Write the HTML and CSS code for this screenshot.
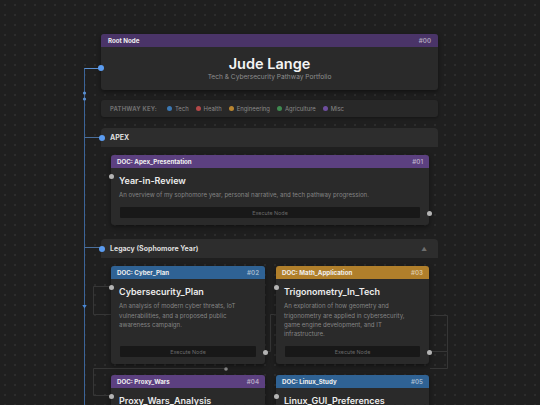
FILE: index.html
```html
<!DOCTYPE html>
<html lang="en">
<head>
<meta charset="utf-8">
<title>Jude Lange — Pathway Portfolio</title>
<link rel="stylesheet" href="styles.css">
</head>
<body>
<div class="canvas">
  <svg class="wires" width="540" height="405" viewBox="0 0 540 405" aria-hidden="true">
    <!-- main trunk and branch edges -->
    <path class="trunk" d="M84.5 68 V405"/>
    <path class="edge-hot" d="M84.5 68.5 H101"/>
    <path class="edge-blue" d="M84.5 137.5 H102"/>
    <path class="edge-blue" d="M84.5 247.5 H102"/>
    <circle class="knot" cx="84.5" cy="93" r="1.6"/>
    <circle class="knot" cx="84.5" cy="99" r="1.6"/>
    <path class="arrow" d="M82.3 305 L86.7 305 L84.5 308.5 Z"/>
    <!-- faint document edges -->
    <path class="edge" d="M111 286.5 H93.5 V314.5 H112"/>
    <path class="edge" d="M265 351.5 H270.5 V314.5 H277"/>
    <path class="edge" d="M429 351.5 H447.5 V315.5 H430"/>
    <path class="edge" d="M447.5 351.5 V368.5 H430"/>
    <path class="edge" d="M226 368.5 H93.5 V395.5 H111"/>
    <circle class="handle" cx="226" cy="369" r="1.8"/>
  </svg>

  <main class="column">
    <article class="node root">
      <header class="node-head head-root"><span>Root Node</span><span class="node-id">#00</span></header>
      <div class="root-body">
        <h1>Jude Lange</h1>
        <p>Tech &amp; Cybersecurity Pathway Portfolio</p>
      </div>
      <span class="port port-blue port-root"></span>
    </article>

    <div class="key">
      <span class="key-label">PATHWAY KEY:</span>
      <span class="key-item"><i class="swatch tech"></i>Tech</span>
      <span class="key-item"><i class="swatch health"></i>Health</span>
      <span class="key-item"><i class="swatch eng"></i>Engineering</span>
      <span class="key-item"><i class="swatch agri"></i>Agriculture</span>
      <span class="key-item"><i class="swatch misc"></i>Misc</span>
    </div>

    <section class="group">
      <div class="group-head"><span class="port port-blue port-group"></span>APEX</div>
      <div class="group-body">
        <article class="node doc">
          <header class="node-head head-misc"><span>DOC: Apex_Presentation</span><span class="node-id">#01</span></header>
          <div class="doc-body">
            <h2>Year-in-Review</h2>
            <p>An overview of my sophomore year, personal narrative, and tech pathway progression.</p>
            <button class="run">Execute Node</button>
          </div>
          <span class="port port-in"></span>
          <span class="port port-out"></span>
        </article>
      </div>
    </section>

    <section class="group">
      <div class="group-head"><span class="port port-blue port-group"></span>Legacy (Sophomore Year)<span class="caret">▲</span></div>
      <div class="group-body grid">
        <article class="node doc">
          <header class="node-head head-tech"><span>DOC: Cyber_Plan</span><span class="node-id">#02</span></header>
          <div class="doc-body">
            <h2>Cybersecurity_Plan</h2>
            <p>An analysis of modern cyber threats, IoT vulnerabilities, and a proposed public awareness campaign.</p>
            <button class="run">Execute Node</button>
          </div>
          <span class="port port-in"></span>
          <span class="port port-out"></span>
        </article>
        <article class="node doc">
          <header class="node-head head-eng"><span>DOC: Math_Application</span><span class="node-id">#03</span></header>
          <div class="doc-body">
            <h2>Trigonometry_In_Tech</h2>
            <p>An exploration of how geometry and trigonometry are applied in cybersecurity, game engine development, and IT infrastructure.</p>
            <button class="run">Execute Node</button>
          </div>
          <span class="port port-in"></span>
          <span class="port port-out"></span>
        </article>
        <article class="node doc">
          <header class="node-head head-misc"><span>DOC: Proxy_Wars</span><span class="node-id">#04</span></header>
          <div class="doc-body">
            <h2>Proxy_Wars_Analysis</h2>
            <p>A look at twentieth-century proxy conflicts and the strategies behind them.</p>
            <button class="run">Execute Node</button>
          </div>
          <span class="port port-in"></span>
        </article>
        <article class="node doc">
          <header class="node-head head-tech"><span>DOC: Linux_Study</span><span class="node-id">#05</span></header>
          <div class="doc-body">
            <h2>Linux_GUI_Preferences</h2>
            <p>A comparison of Linux desktop environments and why I prefer the ones I use.</p>
            <button class="run">Execute Node</button>
          </div>
          <span class="port port-in"></span>
        </article>
      </div>
    </section>
  </main>
</div>
</body>
</html>
```

FILE: styles.css
```css
* { box-sizing: border-box; }

html, body {
  margin: 0;
  padding: 0;
  width: 540px;
  height: 405px;
  overflow: hidden;
  background: #1e1e1e;
  font-family: Inter, "Noto Sans", "Liberation Sans", sans-serif;
  color: #e6e6e6;
}

/* dotted workspace */
.canvas {
  position: relative;
  width: 540px;
  height: 405px;
  background-color: #1f1f1f;
  background-image: radial-gradient(circle at center, #343434 0 0.6px, transparent 0.9px);
  background-size: 10px 10px;
}

.wires {
  position: absolute;
  left: 0;
  top: 0;
  z-index: 0;
  fill: none;
}
.trunk { stroke: #3c6498; stroke-width: 1; }
.edge-hot { stroke: #5a90d2; stroke-width: 1; }
.edge-blue { stroke: #4a6f9c; stroke-width: 1; }
.knot { fill: #5a90d2; }
.arrow { fill: #4a88d6; }
.edge { stroke: #363636; stroke-width: 1; }
.handle { fill: #8a8a8a; }

.column {
  position: relative;
  z-index: 1;
  width: 337px;
  margin-left: 101px;
  padding-top: 34px;
  display: flex;
  flex-direction: column;
  gap: 10px;
}

/* generic node */
.node {
  position: relative;
  background: #2a2a2a;
  border-radius: 3px;
  box-shadow: 0 2px 5px rgba(0, 0, 0, 0.45);
}
.node-head {
  height: 13px;
  padding: 0 6px;
  display: flex;
  align-items: center;
  justify-content: space-between;
  border-radius: 3px 3px 0 0;
  font-size: 6.2px;
  font-weight: 700;
  color: #f0f0f0;
}
.node-id { color: rgba(255, 255, 255, 0.55); font-weight: 600; }
.head-root { background: #4a3468; padding: 0 7px; }
.head-misc { background: #5c4080; }
.head-tech { background: #2f6294; }
.head-eng { background: #b07f2b; }

.root-body {
  padding: 8px 0 8px;
  text-align: center;
}
.root-body h1 {
  margin: 0;
  font-size: 14.5px;
  line-height: 17px;
  font-weight: 600;
  color: #f4f4f4;
}
.root-body p {
  margin: 0;
  font-size: 6.6px;
  line-height: 10px;
  color: #8e8e8e;
}

/* ports */
.port {
  position: absolute;
  width: 5px;
  height: 5px;
  border-radius: 50%;
  background: #b4b4b4;
}
.port-blue { background: #5b9cf0; width: 6px; height: 6px; }
.port-root { left: -3px; top: 31px; }
.port-in { left: -2.5px; top: 18.5px; }
.port-out { right: -2.5px; bottom: 9.5px; }

/* pathway key */
.key {
  height: 17px;
  display: flex;
  align-items: center;
  gap: 7px;
  padding: 0 9px;
  background: #282828;
  border-radius: 3px;
  font-size: 5.9px;
  color: #8a8a8a;
  box-shadow: 0 1px 3px rgba(0, 0, 0, 0.35);
}
.key-label {
  font-weight: 700;
  letter-spacing: 0.2px;
  color: #6f6f6f;
  margin-right: 3px;
}
.key-item { display: flex; align-items: center; gap: 3px; }
.swatch { width: 5px; height: 5px; border-radius: 50%; display: inline-block; }
.tech { background: #3b78b3; }
.health { background: #b34848; }
.eng { background: #b88530; }
.agri { background: #3f8a50; }
.misc { background: #6e4e9e; }

/* groups */
.group { margin-top: 1px; }
.group-head {
  position: relative;
  height: 19px;
  display: flex;
  align-items: center;
  padding: 0 9px;
  background: #2d2d2d;
  border-radius: 4px 4px 0 0;
  font-size: 7px;
  font-weight: 700;
  color: #dedede;
}
.port-group { left: -2px; top: 6.5px; }
.caret {
  margin-left: auto;
  font-size: 5.5px;
  color: #6e6e6e;
  margin-right: 2px;
}
.group-body {
  padding: 8px 9px 3px 10px;
}
.grid {
  display: grid;
  grid-template-columns: 154px 153px;
  column-gap: 11px;
  row-gap: 11px;
}

/* document nodes */
.doc { display: flex; flex-direction: column; }
.doc-body {
  flex: 1;
  display: flex;
  flex-direction: column;
  padding: 7px 9px 7px 8px;
}
.doc-body h2 {
  margin: 0;
  font-size: 9px;
  line-height: 12px;
  font-weight: 600;
  color: #ececec;
}
.doc-body p {
  margin: 3px 0 0;
  font-size: 6.1px;
  line-height: 9.3px;
  color: #858585;
}
.run {
  margin-top: auto;
  height: 11px;
  padding: 0;
  margin-left: 1px;
  border: none;
  border-radius: 1px;
  background: #181818;
  font-family: inherit;
  font-size: 5.4px;
  color: #6a6a6a;
}
.doc-body p + .run { margin-top: 8px; }
.grid .doc-body p + .run { margin-top: auto; }
.grid .doc-body p { margin-bottom: 8px; }
```
